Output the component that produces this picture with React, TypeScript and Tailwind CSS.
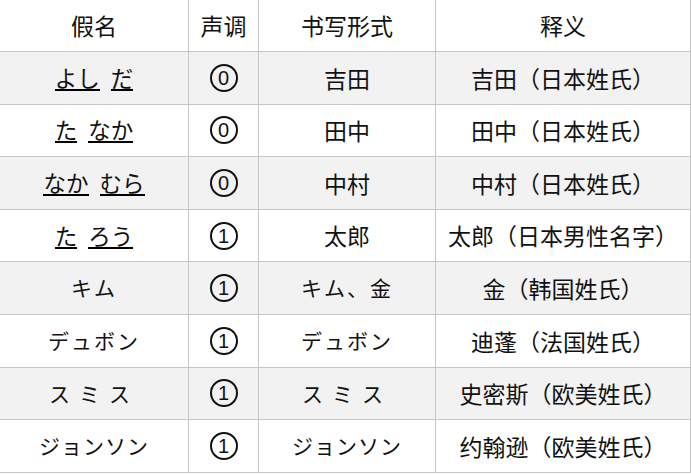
import React from 'react';

type Row = {
  kana: string[] | string;
  kanaTrack?: string;
  tone: '0' | '1';
  form: string;
  formTrack?: string;
  meaning: string;
};

const rows: Row[] = [
  { kana: ['よし', 'だ'], tone: '0', form: '吉田', meaning: '吉田（日本姓氏）' },
  { kana: ['た', 'なか'], tone: '0', form: '田中', meaning: '田中（日本姓氏）' },
  { kana: ['なか', 'むら'], tone: '0', form: '中村', meaning: '中村（日本姓氏）' },
  { kana: ['た', 'ろう'], tone: '1', form: '太郎', meaning: '太郎（日本男性名字）' },
  { kana: 'キム', kanaTrack: 'tracking-[2px]', tone: '1', form: 'キム、金', formTrack: 'tracking-[2px]', meaning: '金（韩国姓氏）' },
  { kana: 'デュボン', kanaTrack: 'tracking-[2px]', tone: '1', form: 'デュボン', formTrack: 'tracking-[2px]', meaning: '迪蓬（法国姓氏）' },
  { kana: 'スミス', kanaTrack: 'tracking-[9px]', tone: '1', form: 'スミス', formTrack: 'tracking-[9px]', meaning: '史密斯（欧美姓氏）' },
  { kana: 'ジョンソン', kanaTrack: 'tracking-[1px]', tone: '1', form: 'ジョンソン', formTrack: 'tracking-[1px]', meaning: '约翰逊（欧美姓氏）' },
];

const gridCols = 'grid grid-cols-[189px_70px_177px_255px]';
const cell = 'flex items-center justify-center border-r border-[#c6c6c6]';

function Kana({ value, track }: { value: Row['kana']; track?: string }) {
  if (typeof value === 'string') {
    return <span className={`text-[21px] ${track ?? ''}`}>{value}</span>;
  }
  return (
    <span className="flex items-center gap-[11px] text-[22.5px]">
      {value.map((part, i) => (
        <span key={i} className="border-b-2 border-black leading-[24px]">
          {part}
        </span>
      ))}
    </span>
  );
}

function Tone({ n }: { n: '0' | '1' }) {
  return (
    <span
      className="flex h-[28px] w-[28px] items-center justify-center rounded-full border-2 border-[#111] text-[20px] leading-none"
      style={{ fontFamily: '"Liberation Sans", sans-serif' }}
    >
      {n}
    </span>
  );
}

export default function App() {
  return (
    <div
      className="w-[691px] h-[474px] bg-white text-[#111] text-[23px]"
      style={{ fontFamily: '"Noto Sans CJK SC", "Noto Sans CJK JP", sans-serif' }}
    >
      <div className={`${gridCols} h-[52px] border-b border-[#c6c6c6]`}>
        <div className={cell}>假名</div>
        <div className={cell}>声调</div>
        <div className={cell}>书写形式</div>
        <div className={cell}>释义</div>
      </div>
      {rows.map((r, i) => (
        <div
          key={i}
          className={`${gridCols} h-[52.6px] border-b border-[#c6c6c6] ${i % 2 === 0 ? 'bg-[#f2f2f2]' : 'bg-white'}`}
        >
          <div className={cell}>
            <Kana value={r.kana} track={r.kanaTrack} />
          </div>
          <div className={cell}>
            <Tone n={r.tone} />
          </div>
          <div className={cell}>
            {r.formTrack ? <span className={`text-[21px] ${r.formTrack}`}>{r.form}</span> : r.form}
          </div>
          <div className={cell}>{r.meaning}</div>
        </div>
      ))}
    </div>
  );
}
